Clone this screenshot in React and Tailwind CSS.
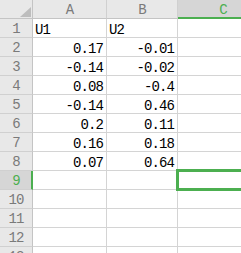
import React from "react";

const data = [
  ["U1", "U2"],
  ["0.17", "-0.01"],
  ["-0.14", "-0.02"],
  ["0.08", "-0.4"],
  ["-0.14", "0.46"],
  ["0.2", "0.11"],
  ["0.16", "0.18"],
  ["0.07", "0.64"],
  ["", ""],
  ["", ""],
  ["", ""],
  ["", ""],
  ["", ""],
];

const font = { fontFamily: '"Liberation Mono", monospace' };

export default function App() {
  return (
    <div
      className="relative w-[241px] h-[253px] overflow-hidden bg-white text-[14px] tracking-[-0.9px]"
      style={font}
    >
      {/* header row */}
      <div className="flex h-[19px]">
        <div className="relative w-[33px] h-[19px] shrink-0 bg-[#e8e8e8] border-r border-b border-[#c4c4c4]">
          <svg className="absolute left-[20px] top-[7px]" width="11" height="10" viewBox="0 0 11 10">
            <polygon points="11,0 11,10 0,10" fill="#bdbdbd" />
          </svg>
        </div>
        <div className="w-[74px] h-[19px] shrink-0 bg-[#e8e8e8] border-r border-b border-r-[#d0d0d0] border-b-[#c4c4c4] flex items-center justify-center text-[#7a7a7a] leading-none pt-[1px]">
          A
        </div>
        <div className="w-[71px] h-[19px] shrink-0 bg-[#e8e8e8] border-r border-b border-r-[#d0d0d0] border-b-[#c4c4c4] flex items-center justify-center text-[#7a7a7a] leading-none pt-[1px]">
          B
        </div>
        <div className="w-[90px] h-[19px] shrink-0 bg-[#d6d6d6] border-b-2 border-[#4caf50] flex items-center justify-center text-[#4caf50] leading-none pt-[2px]">
          C
        </div>
      </div>
      {data.map((r, i) => {
        const sel = i === 8;
        return (
          <div key={i} className="flex h-[19px]">
            <div
              className={
                sel
                  ? "w-[33px] h-[19px] shrink-0 bg-[#d6d6d6] border-r-2 border-r-[#4caf50] border-b border-b-[#d0d0d0] flex items-center justify-center text-[#4caf50] leading-none pt-[2px] pl-[1px]"
                  : "w-[33px] h-[19px] shrink-0 bg-[#e8e8e8] border-r border-b border-r-[#c4c4c4] border-b-[#d0d0d0] flex items-center justify-center text-[#7a7a7a] leading-none pt-[2px]"
              }
            >
              {i + 1}
            </div>
            <div
              className={
                "w-[74px] h-[19px] shrink-0 border-r border-b border-[#d4d4d4] flex items-center leading-none pt-[3px] text-black " +
                (i === 0 ? "justify-start pl-[2px]" : "justify-end pr-[3px]")
              }
            >
              {r[0]}
            </div>
            <div
              className={
                "w-[71px] h-[19px] shrink-0 border-r border-b border-[#d4d4d4] flex items-center leading-none pt-[3px] text-black " +
                (i === 0 ? "justify-start pl-[2px]" : "justify-end pr-[3px]")
              }
            >
              {r[1]}
            </div>
            <div className="w-[90px] h-[19px] shrink-0 border-b border-[#d4d4d4]" />
          </div>
        );
      })}
      <div className="absolute left-[176px] top-[169px] w-[80px] h-[22px] border-[3px] border-[#4caf50]" />
    </div>
  );
}
